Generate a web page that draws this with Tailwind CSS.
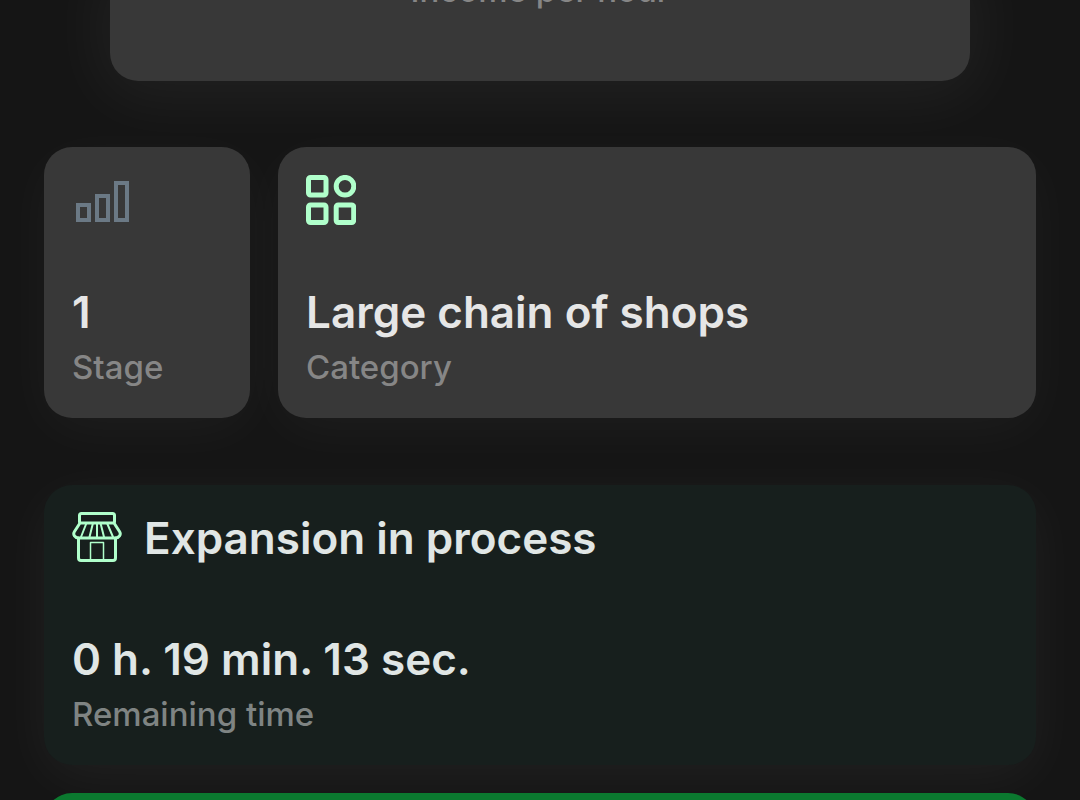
<!DOCTYPE html>
<html lang="en">
<head>
    <meta charset="UTF-8">
    <meta name="viewport" content="width=device-width, initial-scale=1.0">
    <title>Business</title>
    <script src="https://cdn.jsdelivr.net/npm/@tailwindcss/browser@4"></script>
</head>
<body class="bg-[#151515] font-['Inter',sans-serif] text-[#e6e6e6]">
    <main class="h-screen overflow-hidden px-11">
        <!-- Income -->
        <section class="-mt-[30px] mx-[66px] rounded-b-[28px] bg-[#383838] pb-[71px] text-center shadow-[0_8px_64px_12px_rgba(255,255,255,0.05)]">
            <p class="text-[33px] leading-10 font-medium text-[#868686]">Income per hour</p>
        </section>

        <!-- Stage and category -->
        <div class="mt-[66px] flex gap-7">
            <section class="w-[206px] shrink-0 rounded-[28px] bg-[#383838] px-7 pt-7 pb-[31px] shadow-[0_12px_56px_rgba(255,255,255,0.04)]">
                <svg class="h-[50px] w-[60px]" viewBox="0 0 60 50" fill="none" stroke="#6b7985" stroke-width="4" aria-hidden="true">
                    <path d="M6 30h11v15H6zM25 21h11v24H25zM44 8h11v37H44z"/>
                </svg>
                <h2 class="mt-[61px] text-[44px] leading-[52px] font-semibold">1</h2>
                <p class="mt-[9px] text-[33px] leading-10 font-medium text-[#868686]">Stage</p>
            </section>
            <section class="min-w-0 flex-1 rounded-[28px] bg-[#383838] px-7 pt-7 pb-[31px] shadow-[0_12px_56px_rgba(255,255,255,0.04)]">
                <svg class="size-[50px]" viewBox="0 0 50 50" fill="none" stroke="#b0ffcb" stroke-width="5" aria-hidden="true">
                    <rect x="2.5" y="2.5" width="17.5" height="17.5" rx="2"/>
                    <circle cx="39" cy="11.2" r="8.8"/>
                    <rect x="2.5" y="30" width="17.5" height="17.5" rx="2"/>
                    <rect x="30.2" y="30" width="17.5" height="17.5" rx="2"/>
                </svg>
                <h2 class="mt-[61px] text-[44px] leading-[52px] font-semibold">Large chain of shops</h2>
                <p class="mt-[9px] text-[33px] leading-10 font-medium text-[#868686]">Category</p>
            </section>
        </div>

        <!-- Expansion -->
        <section class="mt-[67px] rounded-[28px] bg-[#171f1d] px-7 pt-[27px] pb-[31px] shadow-[0_12px_56px_rgba(255,255,255,0.05)]">
            <div class="flex items-start gap-[22px]">
                <svg class="size-[50px] shrink-0" viewBox="0 0 50 50" fill="none" stroke="#b0ffcb" stroke-width="3" stroke-linejoin="round" stroke-linecap="round" aria-hidden="true">
                    <path d="M7.500 10V3.500a2 2 0 0 1 2-2h31a2 2 0 0 1 2 2V10"/>
                    <path d="M8 11h34l5.500 8.500c2 3-.5 6.500-4 6.500h-37c-3.500 0-6-3.500-4-6.500z"/>
                    <path d="M6.500 26v20a2.500 2.500 0 0 0 2.500 2.500h32a2.500 2.500 0 0 0 2.500-2.500V26"/>
                    <path d="M14.500 11L9 25M21 11l-3.500 14M28.500 11L32 25M35 11l6 14M25 11v14" stroke-width="2"/>
                    <path d="M18.500 48V30.500h13V48" stroke-width="1.500"/>
                </svg>
                <h2 class="text-[44px] leading-[52px] font-semibold text-[#e0e6e5]">Expansion in process</h2>
            </div>
            <p class="mt-[69px] text-[44px] leading-[52px] font-semibold text-[#e0e6e5]">0 h. 19 min. 13 sec.</p>
            <p class="mt-[9px] text-[33px] leading-10 font-medium text-[#7f8483]">Remaining time</p>
        </section>

        <button type="button" aria-label="Speed up" class="mt-7 block h-28 w-full rounded-[28px] bg-[#0b792f]"></button>
    </main>
</body>
</html>
